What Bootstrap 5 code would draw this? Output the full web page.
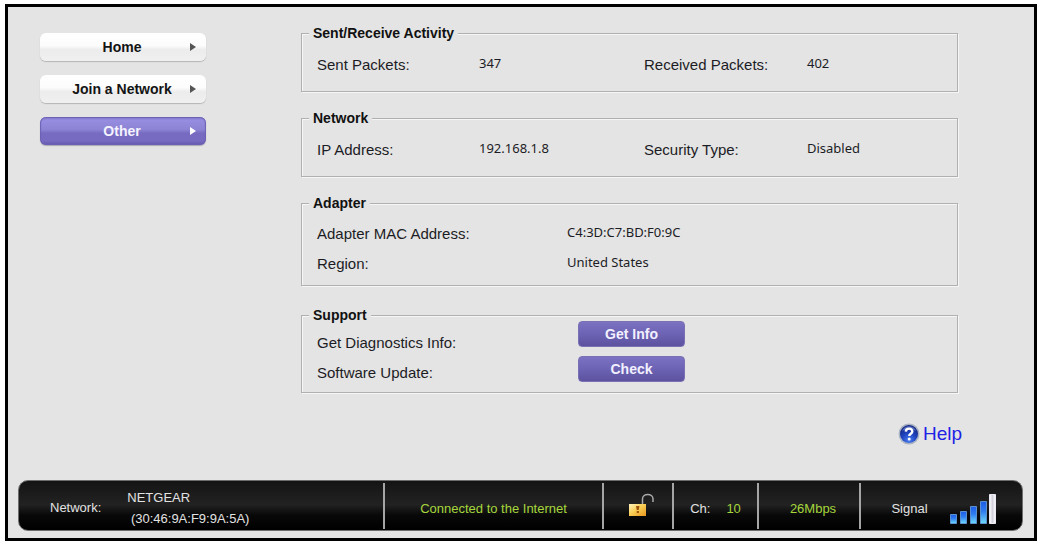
<!DOCTYPE html>
<html lang="en">
<head>
<meta charset="utf-8">
<meta name="viewport" content="width=device-width, initial-scale=1">
<title>NETGEAR Adapter - Other</title>
<link href="https://cdn.jsdelivr.net/npm/bootstrap@5.3.0/dist/css/bootstrap.min.css" rel="stylesheet">
<style>
  body { font-family: "Liberation Sans", Arial, sans-serif; font-size: 15px; line-height: 20px; color: #1c1c24; background: #fff; }
  .window-frame { margin: 4px 3px 4px 5px; border: 3px solid #000; background: #e4e4e4; padding: 18px 11px 7px 10px; }
  .side-menu { width: 166px; margin: 8px 0 0 22px; gap: 14px; }
  .side-link { display: grid; grid-template-columns: 1fr 14px; align-items: center; height: 28px; padding: 0 6px 0 18px; border-radius: 6px; font-size: 14px; font-weight: bold; text-align: center; text-decoration: none; color: #141414; background: linear-gradient(#fff 0%, #fcfcfc 45%, #ececec 60%, #f0f0f0 100%); box-shadow: 0 1px 1px #b4b4b4; }
  .side-link:hover { color: #5a50a0; }
  .side-link.current { color: #f4f2ff; background: linear-gradient(#8478cc 0%, #968de0 12%, #8c83d4 45%, #766bc0 58%, #766bc0 85%, #6358ac 100%); box-shadow: inset 0 0 1px 1px #6c61b4, 0 1px 1px #a8a8b4; }
  .side-link svg { justify-self: center; }
  .panels { margin: 0 65px 0 95px; }
  .panel-box { border: 1px solid #b0b0b0; box-shadow: 1px 1px 0 #f6f6f6, inset 1px 1px 0 #f6f6f6; padding: 0 15px; margin-bottom: 18px; min-width: 0; }
  .panel-box legend { float: none; width: auto; margin: 0 0 0 -8px; padding: 0 4px; font-size: 14px; line-height: 16px; font-weight: bold; color: #111; background: #e4e4e4; }
  .adapter-box { margin-bottom: 21px; }
  .pairs { display: grid; margin: 0; column-gap: 0; row-gap: 10px; align-items: start; }
  .pairs dt { font-weight: normal; }
  .pairs dd { margin: 0; font: 13px/16px "Noto Sans", Tahoma, sans-serif; }
  .pairs.four { grid-template-columns: 162fr 165fr 163fr 135fr; padding: 14px 0 16px; }
  .pairs.two { grid-template-columns: 250fr 375fr; padding: 13px 0 11px; }
  .support-row { display: grid; grid-template-columns: 261fr 364fr; padding-bottom: 9px; margin-top: -2px; }
  .support-labels { gap: 10px; padding-top: 12px; }
  .support-actions { gap: 9px; }
  .btn-violet { width: 107px; height: 26px; padding: 0; border: 1px solid #7a71b4; border-radius: 4px; font-size: 14px; line-height: 20px; font-weight: bold; color: #f2f0ff; background: linear-gradient(#7b72c2, #6c63b4 50%, #5c529f); }
  .btn-violet:hover { color: #fff; background: #5c529f; }
  .help-link { font-size: 19px; line-height: 24px; color: #2121e6; text-decoration: none; gap: 3px; margin: 29px 61px 34px 0; }
  .status-bar { min-height: 51px; border: 1px solid #6d6d6d; border-radius: 10px; padding: 2px 0 1px; font-size: 13px; color: #e2e2e2; background: linear-gradient(#141414 0%, #222 48%, #080808 70%, #000 100%); display: grid; grid-template-columns: 364fr 219fr 70fr 85fr 102fr 163fr; }
  .status-cell { display: flex; align-items: center; justify-content: center; padding-top: 6px; }
  .status-cell + .status-cell { border-left: 2px solid #a5a5a5; }
  .net-cell { justify-content: flex-start; padding: 4px 0 0 31px; gap: 26px; }
  .net-cell .net-name { line-height: 21px; }
  .status-cell.lock-cell { padding: 0 0 2px 6px; }
  .speed-cell { padding-left: 8px; }
  .signal-cell { gap: 22px; padding-left: 4px; }
  .lime { color: #a6d63c; }
</style>
</head>
<body>
<div class="window-frame">
  <div class="d-flex">
    <nav class="side-menu d-flex flex-column flex-shrink-0" aria-label="Sections">
      <a class="side-link" href="#">Home <svg width="6" height="8" viewBox="0 0 6 8" aria-hidden="true"><path d="M0 0l6 4-6 4z" fill="#555"/></svg></a>
      <a class="side-link" href="#">Join a Network <svg width="6" height="8" viewBox="0 0 6 8" aria-hidden="true"><path d="M0 0l6 4-6 4z" fill="#555"/></svg></a>
      <a class="side-link current" href="#" aria-current="page">Other <svg width="6" height="8" viewBox="0 0 6 8" aria-hidden="true"><path d="M0 0l6 4-6 4z" fill="#fff"/></svg></a>
    </nav>
    <main class="panels flex-grow-1">
      <fieldset class="panel-box">
        <legend>Sent/Receive Activity</legend>
        <dl class="pairs four">
          <dt>Sent Packets:</dt><dd>347</dd><dt>Received Packets:</dt><dd>402</dd>
        </dl>
      </fieldset>
      <fieldset class="panel-box">
        <legend>Network</legend>
        <dl class="pairs four">
          <dt>IP Address:</dt><dd>192.168.1.8</dd><dt>Security Type:</dt><dd>Disabled</dd>
        </dl>
      </fieldset>
      <fieldset class="panel-box adapter-box">
        <legend>Adapter</legend>
        <dl class="pairs two">
          <dt>Adapter MAC Address:</dt><dd>C4:3D:C7:BD:F0:9C</dd>
          <dt>Region:</dt><dd>United States</dd>
        </dl>
      </fieldset>
      <fieldset class="panel-box mb-0">
        <legend>Support</legend>
        <div class="support-row">
          <div class="support-labels d-flex flex-column">
            <label for="getInfo">Get Diagnostics Info:</label>
            <label for="check">Software Update:</label>
          </div>
          <div class="support-actions d-flex flex-column">
            <button type="button" class="btn btn-violet" id="getInfo">Get Info</button>
            <button type="button" class="btn btn-violet" id="check">Check</button>
          </div>
        </div>
      </fieldset>
    </main>
  </div>
  <div class="d-flex justify-content-end">
    <a class="help-link d-flex align-items-center" href="#">
      <svg width="22" height="22" viewBox="0 0 22 22" aria-hidden="true">
        <defs><radialGradient id="ball" cx=".5" cy=".85" r=".8"><stop offset="0" stop-color="#4a7df0"/><stop offset=".5" stop-color="#2044c0"/><stop offset="1" stop-color="#14237c"/></radialGradient></defs>
        <circle cx="11" cy="11" r="10.5" fill="#a9b3c4"/>
        <circle cx="11" cy="11" r="9" fill="url(#ball)"/>
        <path d="M4 8a7.500 7.500 0 0 1 14 0c-4-2-10-2-14 0z" fill="#7f9ae6" opacity=".6"/>
        <path d="M7.800 8.600c.2-4 6.700-3.900 6.500 0-.1 2.100-3.100 2.200-3.100 4.400" fill="none" stroke="#fff" stroke-width="2.400"/>
        <circle cx="11.200" cy="16" r="1.500" fill="#fff"/>
      </svg>Help</a>
  </div>
  <footer class="status-bar">
    <div class="status-cell net-cell"><span>Network:</span><span class="net-name">NETGEAR<br>&nbsp;(30:46:9A:F9:9A:5A)</span></div>
    <div class="status-cell lime">Connected to the Internet</div>
    <div class="status-cell lock-cell">
      <svg width="26" height="24" viewBox="0 0 26 24" role="img" aria-label="Unsecured">
        <defs><linearGradient id="gold" x1="0" y1="0" x2="1" y2="1"><stop offset="0" stop-color="#fff3bd"/><stop offset=".45" stop-color="#f9cf55"/><stop offset="1" stop-color="#e8951c"/></linearGradient></defs>
        <path d="M14.500 11V6c0-6 10.500-6 10.500 0v3" fill="none" stroke="#a9a9a9" stroke-width="1.500"/>
        <rect x="1" y="11" width="17" height="12" fill="url(#gold)"/>
        <path d="M8 13h3.500l-.8 4h-2zM8.700 18h2.200v2h-2.200z" fill="#9c5410"/>
      </svg>
    </div>
    <div class="status-cell gap-3"><span>Ch:</span><span class="lime">10</span></div>
    <div class="status-cell speed-cell lime">26Mbps</div>
    <div class="status-cell signal-cell"><span>Signal</span>
      <svg width="46" height="30" viewBox="0 0 46 30" role="img" aria-label="Signal strength 4 of 5">
        <defs><linearGradient id="blue" x1="0" y1="0" x2="0" y2="1"><stop offset="0" stop-color="#1c5de8"/><stop offset=".45" stop-color="#2f7df0"/><stop offset="1" stop-color="#6fdcfb"/></linearGradient>
        <linearGradient id="pale"><stop offset="0" stop-color="#fff"/><stop offset=".5" stop-color="#d3d1dc"/><stop offset="1" stop-color="#fff"/></linearGradient></defs>
        <g fill="url(#blue)" stroke="#5b91cf"><path d="M.5 20.500h6v9h-6z"/><path d="M10.500 17.500h6v12h-6z"/><path d="M20.500 12.500h6v17h-6z"/><path d="M30.500 7.500h6v22h-6z"/></g>
        <path d="M39.500 .5h6v29h-6z" fill="url(#pale)" stroke="#eceaf4"/>
      </svg>
    </div>
  </footer>
</div>
<script src="https://cdn.jsdelivr.net/npm/bootstrap@5.3.0/dist/js/bootstrap.bundle.min.js"></script>
</body>
</html>
